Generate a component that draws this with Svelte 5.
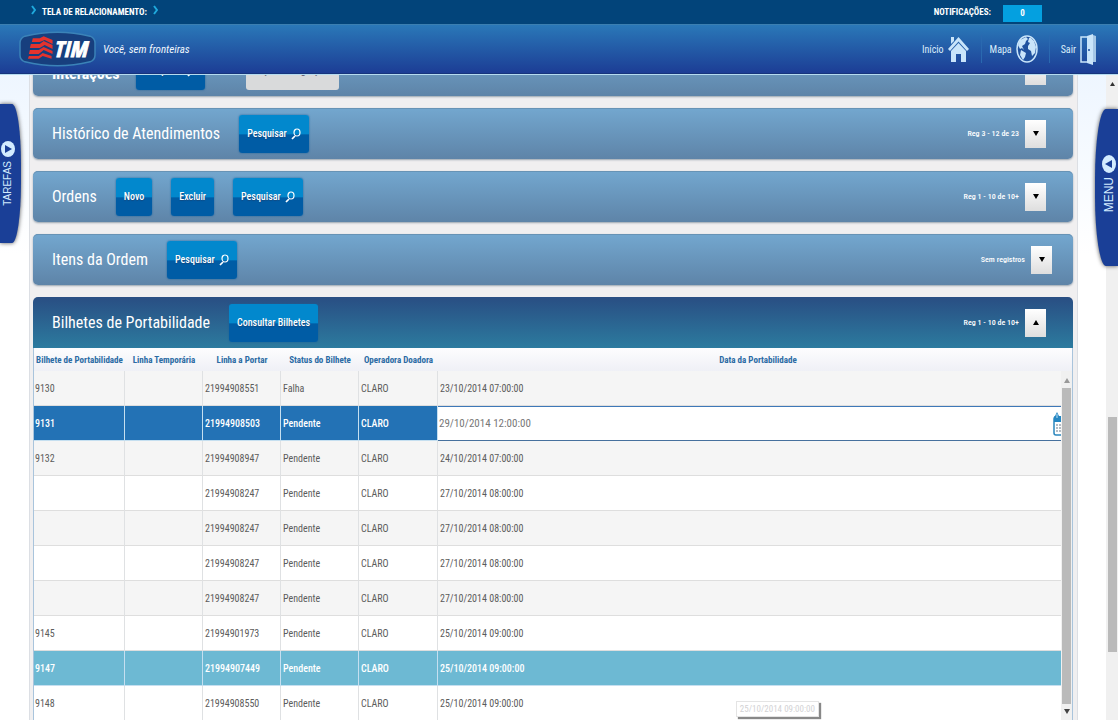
<script>
  const panels = [
    { title: 'Interações', actions: [{ label: 'Pesquisar', icon: true }, { label: 'Ações/Integração', muted: true }], status: 'Reg 1 - 10 de 10+' },
    { title: 'Histórico de Atendimentos', actions: [{ label: 'Pesquisar', icon: true }], status: 'Reg 3 - 12 de 23' },
    { title: 'Ordens', actions: [{ label: 'Novo' }, { label: 'Excluir' }, { label: 'Pesquisar', icon: true }], status: 'Reg 1 - 10 de 10+' },
    { title: 'Itens da Ordem', actions: [{ label: 'Pesquisar', icon: true }], status: 'Sem registros', empty: true },
    { title: 'Bilhetes de Portabilidade', actions: [{ label: 'Consultar Bilhetes' }], status: 'Reg 1 - 10 de 10+', open: true }
  ];

  const columns = ['Bilhete de Portabilidade', 'Linha Temporária', 'Linha a Portar', 'Status do Bilhete', 'Operadora Doadora', 'Data da Portabilidade'];

  const rows = [
    { id: '9130', line: '21994908551', status: 'Falha', date: '23/10/2014 07:00:00' },
    { id: '9131', line: '21994908503', status: 'Pendente', date: '29/10/2014 12:00:00', state: 'selected' },
    { id: '9132', line: '21994908947', status: 'Pendente', date: '24/10/2014 07:00:00' },
    { id: '', line: '21994908247', status: 'Pendente', date: '27/10/2014 08:00:00' },
    { id: '', line: '21994908247', status: 'Pendente', date: '27/10/2014 08:00:00' },
    { id: '', line: '21994908247', status: 'Pendente', date: '27/10/2014 08:00:00' },
    { id: '', line: '21994908247', status: 'Pendente', date: '27/10/2014 08:00:00' },
    { id: '9145', line: '21994901973', status: 'Pendente', date: '25/10/2014 09:00:00' },
    { id: '9147', line: '21994907449', status: 'Pendente', date: '25/10/2014 09:00:00', state: 'hover' },
    { id: '9148', line: '21994908550', status: 'Pendente', date: '25/10/2014 09:00:00' }
  ];
</script>

<div class="app">
  <div class="topbar">
    <nav class="crumbs" aria-label="Localização">
      <svg class="chev" viewBox="0 0 5 10" aria-hidden="true"><path d="M1 1l3 4-3 4" /></svg>
      <span>TELA DE RELACIONAMENTO:</span>
      <svg class="chev" viewBox="0 0 5 10" aria-hidden="true"><path d="M1 1l3 4-3 4" /></svg>
    </nav>
    <div class="notes"><span>NOTIFICAÇÕES:</span><button class="count">0</button></div>
  </div>

  <header class="header">
    <div class="brand">
      <svg class="logo" viewBox="0 0 78 36" role="img" aria-label="TIM">
        <path d="M6 5Q39-3 72 5Q77 7 77 12V24Q77 29 72 31Q39 39 6 31Q1 29 1 24V12Q1 7 6 5Z" fill="#173f7e" stroke="#3b83b8" stroke-width="1.5" />
        <g fill="#e5332d" transform="translate(9 5)">
          <path d="M5 2H12L16 0L25 4V8L17 4L12 6H4Z" />
          <path d="M3 8H12L16 5L25 9V13L17 9L12 12H2Z" />
          <path d="M2 14H11L16 11L25 15V18L16 14L11 18H1Z" />
          <path d="M1 20H11L15 17L24 20V23L15 20L11 23H0Z" />
        </g>
        <text x="35" y="26" font-family="Open Sans Condensed, Roboto Condensed, sans-serif" font-style="italic" font-weight="800" font-size="22" fill="#fff" stroke="#fff" stroke-width="1">TIM</text>
      </svg>
      <span class="slogan">Você, sem fronteiras</span>
    </div>
    <nav class="links" aria-label="Principal">
      <a href="#inicio">Início
        <svg width="21" height="26" viewBox="0 0 21 26" fill="#c9e5fa" aria-hidden="true">
          <path d="M0 13L10.500 1L21 13L19 15L10.500 5.500L2 15Z" /><path d="M3 1H6V5L3 8Z" /><path d="M3 15L10.500 7L18 15V26H13V18H8V26H3Z" />
        </svg>
      </a>
      <a href="#mapa">Mapa
        <svg width="22" height="28" viewBox="0 0 22 28" aria-hidden="true">
          <ellipse cx="11" cy="14" rx="10" ry="13" fill="#20529f" stroke="#c9e5fa" stroke-width="1.500" />
          <path fill="#c9e5fa" d="M10 2L4 5L2 10L4 14L6 13L8 15L6 11L9 9L10 6L12 4ZM13 3L12 7L14 8L12 11L12 14L15 16L16 21L19 18L20 12L18 6L15 3ZM5 15L10 18L9 22L7 25L4 20Z" />
        </svg>
      </a>
      <a class="exit" href="#sair">Sair
        <svg width="16" height="31" viewBox="0 0 16 31" aria-hidden="true">
          <path d="M7 3H1V28H7" fill="none" stroke="#c9e5fa" stroke-width="1.500" /><path d="M7 2L13 0V31L7 29Z" fill="#c9e5fa" /><path d="M13 1L16 2V28H13Z" fill="#a5c7e6" /><circle cx="9" cy="16" r="1" fill="#1d4c9b" />
        </svg>
      </a>
    </nav>
  </header>

  <div class="body">
    <main class="sheet">
      {#each panels as p}
        <section class="panel" class:open={p.open}>
          <div class="bar" class:empty={p.empty}>
            <h2>{p.title}</h2>
            <div class="actions">
              {#each p.actions as a}
                <button class="action" class:muted={a.muted}>
                  {a.label}
                  {#if a.icon}
                    <svg width="10" height="12" viewBox="0 0 10 12" fill="none" stroke="#fff" stroke-width="1.200" aria-hidden="true"><ellipse cx="6" cy="4.500" rx="3" ry="3.500" /><path d="M4 8L1 11" stroke-width="1.700" /></svg>
                  {/if}
                </button>
              {/each}
            </div>
            <span class="status">{p.status}</span>
            <button class="toggle" aria-label={p.open ? 'Recolher' : 'Expandir'} aria-expanded={!!p.open}>
              <svg width="6" height="5" viewBox="0 0 6 5" aria-hidden="true"><path d={p.open ? 'M0 5L3 0L6 5Z' : 'M0 0H6L3 5Z'} /></svg>
            </button>
          </div>

          {#if p.open}
            <div class="grid">
              <div class="clip">
                <table>
                  <colgroup>
                    <col class="c1" /><col class="c2" /><col class="c2" /><col class="c2" /><col class="c5" /><col />
                  </colgroup>
                  <thead>
                    <tr>{#each columns as c}<th scope="col">{c}</th>{/each}</tr>
                  </thead>
                  <tbody>
                    {#each rows as r}
                      <tr class={r.state ?? ''}>
                        <td>{r.id}</td>
                        <td></td>
                        <td>{r.line}</td>
                        <td>{r.status}</td>
                        <td>CLARO</td>
                        {#if r.state === 'selected'}
                          <td class="edit">
                            <div class="field">
                              <input type="text" aria-label="Data da Portabilidade" value={r.date} />
                              <svg width="16" height="24" viewBox="0 0 16 24" aria-hidden="true">
                                <rect x="1" y="5" width="14" height="18" rx="2" fill="#fff" stroke="#2b86bd" stroke-width="1.500" />
                                <path d="M1 10V5Q1 4 2 4L4 0L6 4H15V10Z" fill="#2687c2" /><path d="M4 2V6" stroke="#bfe2f5" />
                                <path d="M3 13H13M3 16H13M3 19H13" stroke="#b4bcc4" stroke-width="2" stroke-dasharray="2 1" />
                              </svg>
                            </div>
                          </td>
                        {:else}
                          <td>{r.date}</td>
                        {/if}
                      </tr>
                    {/each}
                  </tbody>
                </table>
              </div>
              <div class="scroll inner" aria-hidden="true">
                <svg width="6" height="5" viewBox="0 0 6 5" fill="#999"><path d="M0 5L3 0L6 5Z" /></svg>
                <i></i>
                <svg width="6" height="5" viewBox="0 0 6 5" fill="#444"><path d="M0 0H6L3 5Z" /></svg>
              </div>
            </div>
          {/if}
        </section>
      {/each}
    </main>

    <div class="scroll outer" aria-hidden="true">
      <svg width="5" height="4" viewBox="0 0 5 4" fill="#333"><path d="M0 4L2.500 0L5 4Z" /></svg>
      <i></i>
    </div>
  </div>

  <button class="tab left"><span>TAREFAS</span>
    <svg width="14" height="16" viewBox="0 0 14 16" aria-hidden="true"><ellipse cx="7" cy="8" rx="7" ry="8" fill="#d3ecff" /><path d="M4 4L11 8L4 12Z" fill="#1a3f97" /></svg>
  </button>
  <button class="tab right"><span>MENU</span>
    <svg width="14" height="18" viewBox="0 0 14 18" aria-hidden="true"><ellipse cx="7" cy="9" rx="7" ry="9" fill="#d3ecff" /><path d="M10 5L3 9L10 13Z" fill="#1a3f97" /></svg>
  </button>
  <div class="tip" role="tooltip">25/10/2014 09:00:00</div>
</div>

<style>
  :global(body) { margin: 0; }
  * { box-sizing: border-box; }
  button, input { font: inherit; color: inherit; padding: 0; border: 0; }

  .app {
    position: relative;
    display: flex;
    flex-direction: column;
    height: 100vh;
    overflow: hidden;
    background: #fff;
    font-family: 'Roboto Condensed', 'Liberation Sans', sans-serif;
    font-size: 10px;
    color: #5c5c5c;
  }

  .topbar {
    flex: none;
    display: flex;
    justify-content: space-between;
    align-items: center;
    height: 25px;
    padding: 0 76px 0 31px;
    background: #02447a;
    border-bottom: 1px solid #3b7fb1;
    color: #fff;
    font-size: 9px;
    font-weight: 700;
  }
  .crumbs { display: flex; align-items: center; gap: 6px; }
  .chev { width: 5px; height: 10px; margin-top: -4px; fill: none; stroke: #1fa9dc; stroke-width: 2; }
  .notes { display: flex; align-items: center; gap: 12px; }
  .count { width: 39px; height: 17px; margin-top: 2px; background: #04a0e0; }

  .header {
    flex: none;
    display: flex;
    justify-content: space-between;
    height: 49px;
    padding: 0 22px 0 19px;
    background: linear-gradient(#2a78b8, #1c3d95);
    border-bottom: 1px solid #16347c;
    color: #dceefb;
  }
  .brand { display: flex; align-items: center; gap: 7px; }
  .logo { width: 77px; height: 36px; }
  .slogan { font-size: 11px; font-style: italic; color: #f0f7fd; }
  .links { display: flex; align-items: center; }
  .links a { display: flex; align-items: center; gap: 4px; height: 28px; color: inherit; text-decoration: none; font-size: 10px; }
  .links a + a { margin-left: 12px; padding-left: 8px; border-left: 1px solid #2a69b0; }
  .links a.exit { margin-left: 11px; padding-left: 11px; }

  .body {
    flex: 1;
    display: flex;
    min-height: 0;
    overflow: hidden;
    border-top: 1px solid #b5dbf0;
    background: linear-gradient(#eef6ff, #fff 180px);
  }
  .sheet {
    flex: 1;
    min-width: 0;
    display: flex;
    flex-direction: column;
    gap: 12px;
    margin: 0 28px 0 29px;
    padding: 0 4px 0 3px;
    border: solid #dcdfe4;
    border-width: 0 1px;
    background: #f0eff0;
    align-self: stretch;
  }
  .panel { flex: none; }
  .panel:first-child { margin-top: -30px; }
  .bar {
    display: flex;
    align-items: center;
    height: 51px;
    padding: 0 27px 0 19px;
    border-radius: 5px;
    background: linear-gradient(#73a7cf, #5e84a8);
    box-shadow: 0 1px 2px #98a4b0, inset 0 1px #6793b5;
    color: #fff;
  }
  .bar.empty { padding-right: 21px; }
  .open .bar { border-radius: 5px 5px 0 0; background: linear-gradient(#294e83, #2c7b9f); box-shadow: none; }
  h2 { margin: 0 19px 0 0; font-size: 16px; font-weight: 400; }
  .panel:first-child h2 { margin-right: 16px; padding-top: 6px; font-weight: 700; }
  .actions { display: flex; gap: 19px; }
  .action {
    display: flex;
    align-items: center;
    gap: 4px;
    height: 38px;
    padding: 0 8px;
    border-radius: 3px;
    background: linear-gradient(#0288cd 0 50%, #005ca5 52% 100%);
    box-shadow: 0 0 2px #1c5f9a;
    font-weight: 500;
    text-shadow: 0 1px 1px #134a80;
  }
  .panel:first-child .action + .action { margin-left: 22px; }
  .action.muted { padding: 0 11px; background: #d9dadb; color: #667; box-shadow: none; text-shadow: none; }
  .status { margin-left: auto; font-size: 8px; font-weight: 500; }
  .toggle {
    display: grid;
    place-items: center;
    width: 21px;
    height: 28px;
    margin-left: 6px;
    background: linear-gradient(#fff, #dedede);
  }

  .grid {
    display: flex;
    border: solid #a9c4dc;
    border-width: 0 1px 0 1px;
    background: linear-gradient(#fdfdfe, #eff0f6 23px, #f5f5f5 23px);
  }
  .clip { flex: 1; min-width: 0; overflow: hidden; }
  table { width: calc(100% + 17px); border-collapse: separate; border-spacing: 0; table-layout: fixed; }
  .c1 { width: 91px; }
  .c2 { width: 78px; }
  .c5 { width: 79px; }
  th { height: 23px; padding: 0; white-space: nowrap; font-size: 9px; font-weight: 700; color: #2b6ba4; text-align: center; }
  td { height: 35px; padding: 0 1px 0 2px; border-right: 1px solid #dfe1e3; border-bottom: 1px solid #dedede; background: #f5f5f5; white-space: nowrap; }
  td:first-child { padding-left: 1px; }
  td:last-child { border-right: 0; }
  tr:nth-child(even) td { background: #fff; }
  tr.selected td, tr.hover td { border-color: #c5dff0; color: #fff; font-weight: 500; }
  tr.selected td { background: #2372b5; }
  tr.hover td { background: #6db9d3; }
  tr.selected td.edit { padding: 0; background: #fff; border-bottom: 1px solid #46709d; border-top: 1px solid #3e78b8; color: #777; }
  .field { display: flex; align-items: center; padding: 0 9px 0 1px; }
  .field input { flex: 1; min-width: 0; background: none; font-size: 11px; font-weight: 400; }

  .scroll { display: flex; flex-direction: column; align-items: center; background: #f0f0f0; }
  .scroll i { width: 9px; background: #bababa; }
  .inner { width: 11px; margin-top: 23px; padding: 7px 0 6px; gap: 5px; height: 349px; }
  .inner i { flex: 1; }
  .outer { flex: none; width: 12px; padding-top: 7px; }
  .outer i { height: 235px; margin-top: 331px; }

  .tab {
    position: absolute;
    display: flex;
    flex-direction: column;
    align-items: center;
    justify-content: center;
    gap: 4px;
    background: #1a3f97;
    box-shadow: 0 0 4px #555;
    color: #d3ecff;
  }
  .tab span { writing-mode: vertical-rl; rotate: 180deg; font-family: 'Liberation Sans', sans-serif; font-size: 10px; }
  .tab svg { order: -1; }
  .tab.left { left: 0; top: 104px; width: 21px; height: 139px; padding-right: 6px; border-radius: 0 9px 9px 0 / 0 60px 60px 0; }
  .tab.right { right: 0; top: 109px; width: 23px; height: 157px; padding: 0 0 8px 4px; border-radius: 11px 0 0 11px / 70px 0 0 70px; }
  .tab.right span { font-size: 12px; }
  .tip {
    position: absolute;
    right: 299px;
    bottom: 3px;
    padding: 2px 3px;
    border: 1px solid #e4e4e4;
    background: #fff;
    box-shadow: 2px 2px 1px #888;
    color: #d2d2d4;
    font-size: 9px;
  }
</style>
